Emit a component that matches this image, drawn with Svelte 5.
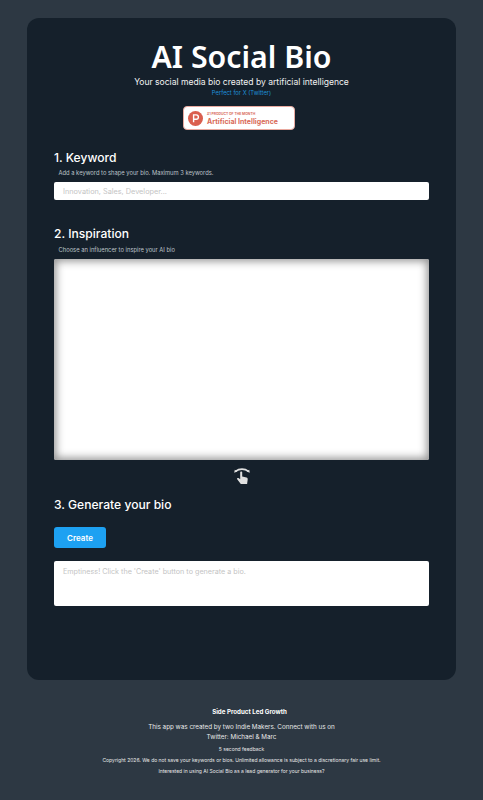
<script>
	const footerLines = [
		'5 second feedback',
		'Copyright 2026. We do not save your keywords or bios. Unlimited allowance is subject to a discretionary fair use limit.',
		'Interested in using AI Social Bio as a lead generator for your business?'
	];
</script>

<div class="page">
	<main class="card">
		<header class="hero">
			<h1>AI Social Bio</h1>
			<p class="tagline">Your social media bio created by artificial intelligence</p>
			<p class="perfect">Perfect for X (Twitter)</p>
			<div class="badge">
				<svg width="15" height="15" viewBox="0 0 15 15" aria-hidden="true">
					<circle cx="7.5" cy="7.5" r="7.5" fill="#da5f4e" />
					<path d="M5.6 11.2V3.9h2.6a2.2 2.2 0 0 1 0 4.400H5.600" fill="none" stroke="#fff" stroke-width="1.400" />
				</svg>
				<div class="badge-text">
					<span class="badge-small">#1 PRODUCT OF THE MONTH</span>
					<span class="badge-big">Artificial Intelligence</span>
				</div>
			</div>
		</header>

		<section class="keyword">
			<h2>1. Keyword</h2>
			<p class="hint">Add a keyword to shape your bio. Maximum 3 keywords.</p>
			<input type="text" placeholder="Innovation, Sales, Developer..." />
		</section>

		<section class="inspiration">
			<h2>2. Inspiration</h2>
			<p class="hint tight">Choose an influencer to inspire your AI bio</p>
			<div class="picker"></div>
			<div class="swipe">
				<svg width="18" height="18" viewBox="0 0 18 18" aria-hidden="true">
					<path d="M2.500 4.400C4.500 2.900 6.600 2.200 9 2.200s4.500.7 6.500 2.200" fill="none" stroke="#e0e0e0" stroke-width="1.800" />
					<path d="M1.200 5.800l.6-3 2.500 1.800zM16.800 5.800l-.6-3-2.500 1.800z" fill="#e0e0e0" />
					<path d="M7.200 5.200c0-1.100 2-1.100 2 0v4.300l4.300 1.100c1 .3 1.300 1 1.200 1.900l-.6 4.500H7.800L4.200 12.300c-.6-.9.400-1.800 1.300-1.200l1.700 1.200z" fill="#e0e0e0" />
				</svg>
			</div>
		</section>

		<section class="generate">
			<h2>3. Generate your bio</h2>
			<button type="button">Create</button>
			<textarea placeholder="Emptiness! Click the 'Create' button to generate a bio."></textarea>
		</section>
	</main>

	<footer>
		<p class="brand">Side Product Led Growth</p>
		<p class="makers">This app was created by two Indie Makers. Connect with us on<br />Twitter: Michael &amp; Marc</p>
		{#each footerLines as line}
			<p class="fine">{line}</p>
		{/each}
	</footer>
</div>

<style>
	:global(body) {
		margin: 0;
		background: #2d3843;
	}

	.page {
		box-sizing: border-box;
		min-height: 800px;
		padding: 18px 27px 0;
		font-family: Inter, "Liberation Sans", sans-serif;
		color: #fff;
	}

	.card {
		box-sizing: border-box;
		height: 662px;
		padding: 20px 27px 0;
		background: #15202b;
		border-radius: 12px;
	}

	.hero {
		display: flex;
		flex-direction: column;
		align-items: center;
		text-align: center;
	}

	h1 {
		margin: 0;
		font-family: "Noto Sans", sans-serif;
		font-size: 30.300px;
		line-height: 38px;
		font-weight: 600;
	}

	.tagline {
		margin: 0;
		font-size: 8.550px;
		line-height: 13px;
		color: #f2f2f2;
	}

	.perfect {
		margin: 0;
		font-size: 5.800px;
		line-height: 7px;
		color: #1d8fd8;
	}

	.badge {
		box-sizing: border-box;
		display: flex;
		align-items: center;
		gap: 4px;
		width: 112px;
		height: 24px;
		margin: 10px 5px 0 0;
		padding: 0 4px;
		background: #fff;
		border: 1px solid #e9a99f;
		border-radius: 4px;
		text-align: left;
	}

	.badge-text {
		display: flex;
		flex-direction: column;
		white-space: nowrap;
	}

	.badge-small {
		font-size: 3.400px;
		line-height: 6px;
		font-weight: 700;
		color: #da6f5f;
	}

	.badge-big {
		font-size: 7px;
		line-height: 9px;
		font-weight: 700;
		color: #d96a58;
	}

	h2 {
		margin: 0;
		font-size: 12.100px;
		line-height: 18px;
		font-weight: 500;
		color: #fff;
	}

	.hint {
		margin: 1px 0 0 4.500px;
		font-size: 5.800px;
		line-height: 10px;
		color: #bcc2c8;
	}

	.hint.tight {
		margin-top: 2px;
	}

	.keyword {
		margin-top: 19px;
	}

	input {
		display: block;
		box-sizing: border-box;
		width: 100%;
		height: 18px;
		margin-top: 4px;
		padding: 0 9px;
		border: none;
		border-radius: 2px;
		background: #fff;
		font-family: inherit;
		font-size: 7.300px;
	}

	input::placeholder,
	textarea::placeholder {
		color: #c4c4c4;
		opacity: 1;
	}

	.inspiration {
		margin-top: 25px;
	}

	.picker {
		height: 201px;
		margin-top: 4px;
		background: #fff;
		border-radius: 2px;
		box-shadow: inset 0 0 8px 2px #8f8f8f;
	}

	.swipe {
		display: flex;
		justify-content: center;
		margin-top: 7px;
	}

	.generate {
		margin-top: 11px;
	}

	button {
		display: block;
		width: 52px;
		height: 21px;
		margin-top: 13px;
		padding: 0;
		border: none;
		border-radius: 3px;
		background: #1da1f2;
		color: #fff;
		font-family: inherit;
		font-size: 8px;
		font-weight: 600;
	}

	textarea {
		display: block;
		box-sizing: border-box;
		width: 100%;
		height: 45px;
		margin-top: 13px;
		padding: 6px 9px;
		border: none;
		border-radius: 2px;
		background: #fff;
		font-family: inherit;
		font-size: 7.200px;
		resize: none;
	}

	footer {
		padding-top: 27px;
		text-align: center;
		color: #e8e8e8;
	}

	footer p {
		margin: 0;
	}

	.brand {
		padding-left: 16px;
		font-size: 6.200px;
		line-height: 10px;
		font-weight: 700;
		color: #fff;
	}

	.makers {
		margin-top: 5px !important;
		font-size: 6.300px;
		line-height: 10px;
	}

	.fine {
		margin-top: 3px !important;
		font-size: 5px;
		line-height: 8px;
	}
</style>
